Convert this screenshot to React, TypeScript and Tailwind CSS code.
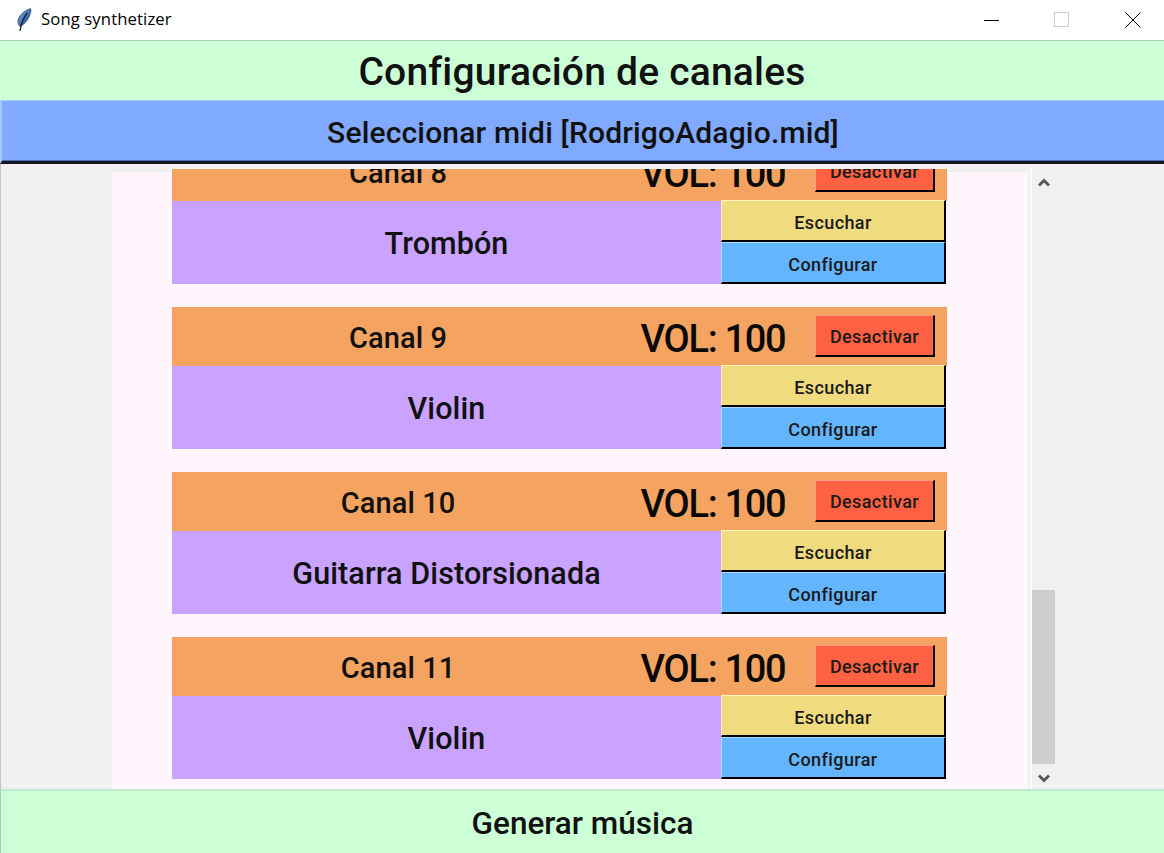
import React from "react";

const channels = [
  { canal: "Canal 8", instrument: "Trombón" },
  { canal: "Canal 9", instrument: "Violin" },
  { canal: "Canal 10", instrument: "Guitarra Distorsionada" },
  { canal: "Canal 11", instrument: "Violin" },
];

const Feather = () => (
  <svg width="16" height="24" viewBox="0 0 16 24" className="ml-[16px]">
    <defs>
      <linearGradient id="quill" x1="0" y1="0" x2="1" y2="1">
        <stop offset="0" stopColor="#8fb8e8" />
        <stop offset="0.5" stopColor="#3f78c4" />
        <stop offset="1" stopColor="#1d3f73" />
      </linearGradient>
    </defs>
    <path d="M14.5 0.5 C10 2 3.5 6 2 12 C1.5 15 2.5 17 4 18.5 C7.5 17 11.5 13 13.5 8 C14.5 5 15.5 2.5 14.5 0.5 Z" fill="url(#quill)" stroke="#33445c" strokeWidth="0.7" />
    <path d="M11 5 C8 9 5.5 14 4 23" fill="none" stroke="#222" strokeWidth="1.3" />
  </svg>
);

const TitleBar = () => (
  <div className="h-10 bg-white flex items-center shrink-0">
    <Feather />
    <span className="ml-[9px] -mt-[2px] text-[16.7px] tracking-[0.1px] text-black font-['Open_Sans',sans-serif]">Song synthetizer</span>
    <div className="ml-auto flex items-center">
      <svg width="16" height="16" className="mr-[54px]"><path d="M0 8.5H15" stroke="#000" /></svg>
      <svg width="16" height="16" className="mr-[55px]"><rect x="0.5" y="0.5" width="14" height="14" fill="none" stroke="#ccc" /></svg>
      <svg width="16" height="16" className="mr-[23px]"><path d="M0.5 0.5L15.5 15.5M15.5 0.5L0.5 15.5" stroke="#000" /></svg>
    </div>
  </div>
);

const SmallButton = ({ label, className }: { label: string; className: string }) => (
  <button className={`flex items-center justify-center pt-[3px] text-[18px] font-medium tracking-[0.4px] text-[#1a1a1a] border-solid border-t-[1.5px] border-l-[1.5px] border-r-2 border-b-2 border-r-black border-b-black ${className}`}>
    {label}
  </button>
);

const ChannelCard = ({ canal, instrument }: { canal: string; instrument: string }) => (
  <div className="w-[775px] h-[142px] flex flex-col shrink-0">
    <div className="h-[59px] bg-[#f4a460] flex items-center">
      <span className="w-[452px] pt-1 text-center text-[29px] tracking-[0.1px] font-medium text-[#111] leading-none">{canal}</span>
      <span className="ml-[16px] w-[146px] pt-1 text-center text-[38px] tracking-[-1.3px] font-medium text-[#0a0a0a] leading-none whitespace-nowrap">VOL: 100</span>
      <SmallButton
        label="Desactivar"
        className="ml-[29px] w-[120px] h-[42px] -mt-[2px] pt-[1px] bg-[#ff6142] border-t-[#ff9a86] border-l-[#ff9a86]"
      />
    </div>
    <div className="flex h-[84px] -mt-px">
      <div className="w-[549px] mt-px pt-[4px] bg-[#c9a3ff] flex items-center justify-center text-[30.5px] tracking-[0.1px] font-medium text-[#111] leading-none">
        {instrument}
      </div>
      <div className="w-[225px] flex flex-col">
        <SmallButton label="Escuchar" className="h-[42px] bg-[#f0db7f] border-t-[#fff3c0] border-l-[#fff3c0]" />
        <SmallButton label="Configurar" className="h-[42px] bg-[#64b5ff] border-t-[#a8dcff] border-l-[#a8dcff]" />
      </div>
    </div>
  </div>
);

const Scrollbar = () => (
  <div className="w-[25px] ml-[2px] mt-[5px] border-l-2 border-[#fafafa] flex flex-col items-center">
    <svg width="14" height="11" viewBox="0 0 14 11" className="mt-[8px]">
      <path d="M2 8.5L7 3.5L12 8.5" fill="none" stroke="#555" strokeWidth="2.8" />
    </svg>
    <div className="mt-[402px] w-[23px] h-[174px] bg-[#cdcdcd]" />
    <svg width="14" height="11" viewBox="0 0 14 11" className="mt-[9px]">
      <path d="M2 2.5L7 7.5L12 2.5" fill="none" stroke="#555" strokeWidth="2.8" />
    </svg>
  </div>
);

export default function App() {
  return (
    <div className="w-[1164px] h-[853px] flex flex-col overflow-hidden bg-[#f0f0f0] font-['Roboto',sans-serif]">
      <TitleBar />
      <div className="h-[60px] shrink-0 pt-1 bg-[#ccffd6] border-t border-[#a9d0b0] flex items-center justify-center text-[39px] tracking-[0.2px] font-medium text-[#111] leading-none">
        Configuración de canales
      </div>
      <div className="h-[64px] shrink-0 pt-1 bg-[#80aaff] border-t border-t-[#a8c8ff] border-l-2 border-l-[#a8c8ff] border-b-[3px] border-b-[#14171f] shadow-[inset_0_-1px_0_#4a6cb0] flex items-center justify-center text-[30px] tracking-[0.17px] font-medium text-[#111] leading-none">
        Seleccionar midi [RodrigoAdagio.mid]
      </div>
      <div className="flex-1 flex min-h-0 pl-[112px] border-l border-[#c4c4c4]">
        {/* canvas: el contenido asoma 3px sobre el fondo */}
        <div className="-ml-px w-[916px] mt-[5px] overflow-hidden bg-[linear-gradient(#f0f0f0_3px,#fff5fd_3px)] pl-[60px]">
          <div className="-mt-[27px] flex flex-col gap-[23px]">
            {channels.map((c) => (
              <ChannelCard key={c.canal} canal={c.canal} instrument={c.instrument} />
            ))}
          </div>
        </div>
        <Scrollbar />
      </div>
      <div className="h-[64px] shrink-0 pt-1 bg-[#ccffd6] border-t-2 border-t-[#bfeccb] border-l border-l-[#b0c8b4] flex items-center justify-center text-[31.5px] font-medium text-[#111] leading-none">
        Generar música
      </div>
    </div>
  );
}
